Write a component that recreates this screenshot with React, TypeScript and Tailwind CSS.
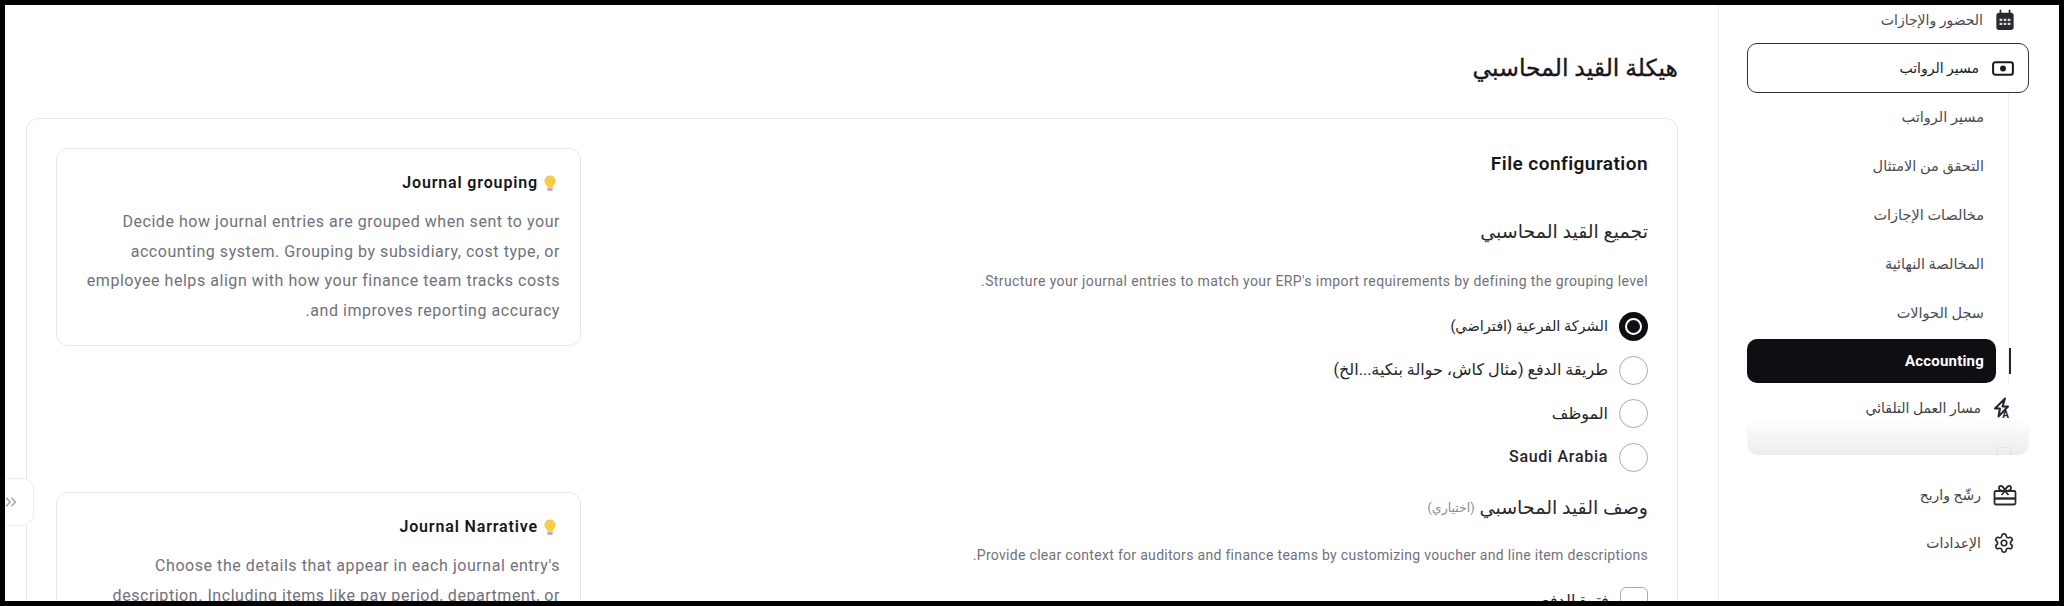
import { ChevronsRight, Settings } from "lucide-react";

const FONT = "font-['Roboto','DejaVu_Sans',sans-serif]";

const subItems = [
  "مسير الرواتب",
  "التحقق من الامتثال",
  "مخالصات الإجازات",
  "المخالصة النهائية",
  "سجل الحوالات",
];

const radios = [
  { label: "الشركة الفرعية (افتراضي)", checked: true, size: "text-[14.500px]" },
  { label: "طريقة الدفع (مثال كاش، حوالة بنكية...الخ)", checked: false, size: "text-[16px]" },
  { label: "الموظف", checked: false, size: "text-[16px]" },
];

function CalendarIcon() {
  return (
    <svg width="20" height="23" viewBox="0 0 22 24" fill="none" className="shrink-0">
      <rect x="1.5" y="3.5" width="19" height="19" rx="3" fill="#2a2a2e" />
      <path d="M6 1v5M16 1v5" stroke="#2a2a2e" strokeWidth="2" strokeLinecap="round" />
      <path d="M5 10h3v2.500H5zM9.500 10h3v2.500h-3zM14 10h3v2.500h-3zM5 14.500h3V17H5zM9.500 14.500h3V17h-3zM14 14.500h3V17h-3z" fill="#d8d8da" />
    </svg>
  );
}

function MoneyIcon() {
  return (
    <svg width="22" height="15" viewBox="0 0 24 16" fill="none" className="shrink-0">
      <rect x="1.2" y="1.2" width="21.6" height="13.6" rx="2.5" stroke="#1a1a1e" strokeWidth="2.2" />
      <circle cx="12" cy="8" r="3.2" fill="#1a1a1e" />
    </svg>
  );
}

function AutoIcon() {
  return (
    <svg dir="ltr" width="24" height="22" viewBox="0 0 24 22" fill="none" className="shrink-0">
      <path d="M12 1.500 2 11.500h5l-1.500 8L15 9.500H9.500z" stroke="#26262a" strokeWidth="2" strokeLinejoin="round" />
      <text x="16" y="21" fontSize="10" fontWeight="700" fill="#26262a" fontFamily="Roboto">A</text>
    </svg>
  );
}

function GiftIcon() {
  return (
    <svg width="24" height="22" viewBox="0 0 24 22" fill="none" stroke="#2a2a2e" strokeWidth="1.8" strokeLinejoin="round" className="shrink-0">
      <rect x="1.500" y="7" width="21" height="13.500" rx="1.500" />
      <path d="M1.500 14.500h21" strokeWidth="2.400" />
      <path d="M12 7 8.500 11M12 7l3.500 4" />
      <path d="M12 7C9 7 5.500 6.500 6 3.500 6.500.8 10.500 1.500 12 7ZM12 7c3 0 6.500-.5 6-3.500C17.500.8 13.500 1.500 12 7Z" />
    </svg>
  );
}

function Bulb() {
  return (
    <svg width="12" height="17" viewBox="0 0 12 17" className="shrink-0">
      <path d="M6 .5a5.500 5.500 0 0 0-3 10.100V12h6v-1.400A5.500 5.500 0 0 0 6 .5Z" fill="#fbcb45" />
      <rect x="3.200" y="12.500" width="5.600" height="3.500" rx="1.200" fill="#b9aec9" />
    </svg>
  );
}

function HintCard({ title, lines }: { title: string; lines: string[] }) {
  return (
    <div className="h-[198px] w-[525px] shrink-0 rounded-xl border border-[#e4e7ec] bg-white px-[20px] pt-[24px]">
      <div className="flex items-center gap-[6px] pr-[4px]">
        <Bulb />
        <span className="text-[16px] font-semibold leading-[20px] tracking-[0.85px] text-[#17171b]">{title}</span>
      </div>
      <div className="mt-[14px] text-[16px] leading-[29.500px] tracking-[0.55px] text-[#71717a]">
        {lines.map((line) => (
          <p key={line}>{line}</p>
        ))}
      </div>
    </div>
  );
}

export default function App() {
  return (
    <div dir="rtl" className={`${FONT} box-border flex h-[606px] w-[2064px] overflow-hidden border-[5px] border-black bg-white`}>
      {/* Sidebar */}
      <aside className="h-full w-[341px] shrink-0 border-l border-[#eeeef0] pl-[28px] pr-[30px]">
        <div className="flex h-[30px] items-center gap-[12px] pr-[14px] text-[14px] text-[#4b4b52]">
          <CalendarIcon />
          <span>الحضور والإجازات</span>
        </div>
        <div className="mt-[8px] flex h-[50px] items-center gap-[13px] rounded-[10px] border-[1.500px] border-[#33333a] pr-[14px] text-[14px] font-medium text-[#1b1b1f]">
          <MoneyIcon />
          <span>مسير الرواتب</span>
        </div>
        <div className="mr-[20px] border-r border-[#eeeef0]">
          <div className="pr-[24px] text-[14.500px] text-[#4b4b52]">
            {subItems.map((item) => (
              <div key={item} className="flex h-[49px] items-center">{item}</div>
            ))}
          </div>
          <div className="relative mr-[12px] mt-[1px] flex h-[44px] items-center rounded-[10px] bg-[#0f0f13] pr-[12px] text-[15px] font-bold tracking-[0.2px] text-white">
            Accounting
            <span className="absolute right-[-15px] top-[9px] h-[26px] w-[2px] bg-[#26262a]" />
          </div>
        </div>
        <div className="flex h-[50px] items-center gap-[12px] pr-[12px] text-[14px] text-[#3f3f46]">
          <AutoIcon />
          <span>مسار العمل التلقائي</span>
        </div>
        <div className="relative -mt-[14px] h-[36px] overflow-hidden rounded-b-[12px] bg-gradient-to-b from-white/60 to-[#ececee]">
          <span className="absolute right-[18px] top-[28px] h-[14px] w-[14px] rounded-[3px] border border-[#e2e2e5]" />
        </div>
        <div className="mt-[18px] flex h-[44px] items-center gap-[12px] pr-[12px] text-[14px] text-[#3f3f46]">
          <GiftIcon />
          <span>رشّح واربح</span>
        </div>
        <div className="mt-[4px] flex h-[44px] items-center gap-[12px] pr-[14px] text-[14px] text-[#3f3f46]">
          <Settings size={22} color="#2a2a2e" strokeWidth={1.8} className="shrink-0" />
          <span>الإعدادات</span>
        </div>
      </aside>

      {/* Main */}
      <main className="relative min-w-0 flex-1 pl-[21px] pr-[40px]">
        <h1 className="mt-[44px] h-[38px] text-[23.500px] leading-[38px] text-[#17171b] [-webkit-text-stroke:0.35px_#17171b]">هيكلة القيد المحاسبي</h1>
        <div className="mt-[31px] flex justify-between rounded-xl border border-[#e4e7ec] pb-[40px] pl-[29px] pr-[29px] pt-[29px]">
          <div className="min-w-0 flex-1">
            <h2 className="mt-[1px] h-[30px] text-[19px] font-semibold leading-[30px] tracking-[0.45px] text-[#17171b]">File configuration</h2>
            <h3 className="mt-[37px] text-[19px] leading-[32px] text-[#2a2a2e]">تجميع القيد المحاسبي</h3>
            <p className="mt-[23px] text-[14px] leading-[20px] tracking-[0.4px] text-[#71717a]">
              Structure your journal entries to match your ERP's import requirements by defining the grouping level.
            </p>
            <div className="mt-[21px] flex flex-col gap-[14.500px] text-[#26262a]">
              {radios.map((r) => (
                <label key={r.label} className={`flex h-[29px] items-center gap-[11px] ${r.size}`}>
                  {r.checked ? (
                    <span className="flex h-[29px] w-[29px] items-center justify-center rounded-full bg-[#0f0f13]">
                      <span className="h-[17px] w-[17px] rounded-full border-2 border-white" />
                    </span>
                  ) : (
                    <span className="h-[29px] w-[29px] rounded-full border-[1.500px] border-[#a9a9b0]" />
                  )}
                  {r.label}
                </label>
              ))}
              <label className="flex h-[29px] items-center gap-[11px] text-[16px] font-medium tracking-[0.7px]">
                <span className="h-[29px] w-[29px] rounded-full border-[1.500px] border-[#a9a9b0]" />
                Saudi Arabia
              </label>
            </div>
            <h3 className="mt-[20px] flex items-center gap-[5px] text-[19px] leading-[32px] text-[#2a2a2e]">
              وصف القيد المحاسبي
              <span className="text-[12.500px] text-[#8a8a92]">(اختياري)</span>
            </h3>
            <p className="mt-[21px] text-[14px] leading-[20px] tracking-[0.31px] text-[#71717a]">
              Provide clear context for auditors and finance teams by customizing voucher and line item descriptions.
            </p>
            <label className="mt-[22px] flex h-[28px] items-center gap-[11px] text-[16px] text-[#26262a]">
              <span className="h-[28px] w-[28px] rounded-md border-[1.500px] border-[#a9a9b0]" />
              فترة الدفع
            </label>
          </div>
          <div className="flex flex-col gap-[146px]">
            <HintCard
              title="Journal grouping"
              lines={[
                "Decide how journal entries are grouped when sent to your",
                "accounting system. Grouping by subsidiary, cost type, or",
                "employee helps align with how your finance team tracks costs",
                "and improves reporting accuracy.",
              ]}
            />
            <HintCard
              title="Journal Narrative"
              lines={[
                "Choose the details that appear in each journal entry's",
                "description. Including items like pay period, department, or",
              ]}
            />
          </div>
        </div>
        <div className="absolute left-0 top-[473px] flex h-[48px] w-[29px] items-center justify-end overflow-hidden rounded-r-xl border border-l-0 border-[#eeeef0] bg-white">
          <ChevronsRight size={18} color="#a3a3aa" className="ml-[-3px] shrink-0" />
        </div>
      </main>
    </div>
  );
}
